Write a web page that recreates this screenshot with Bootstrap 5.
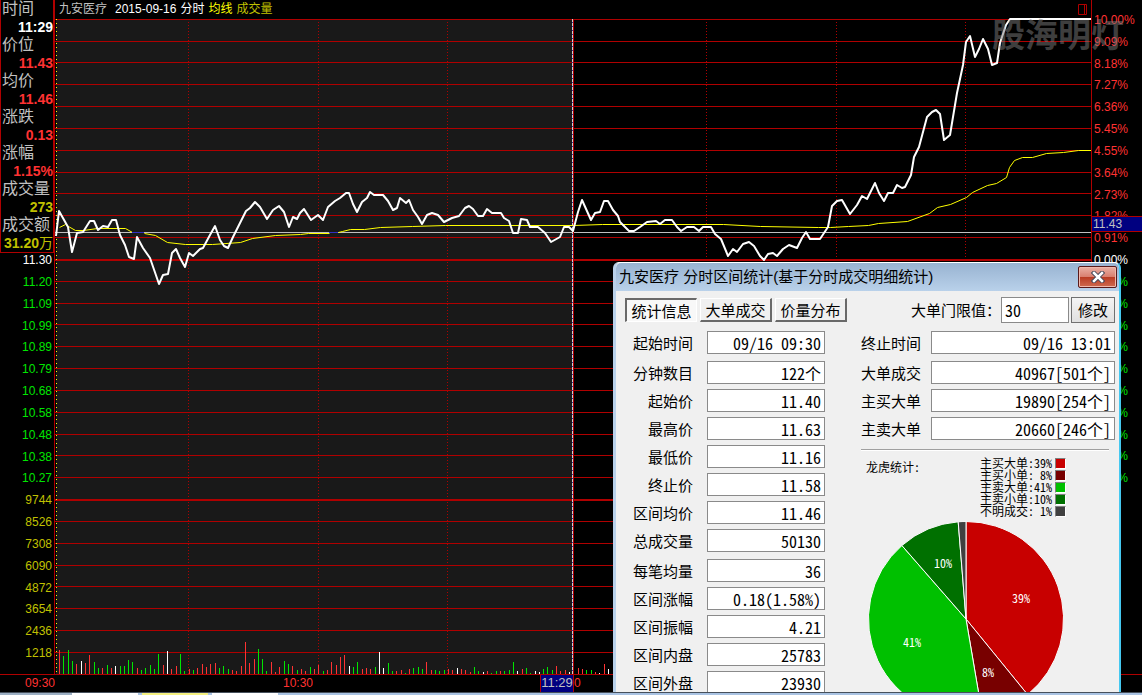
<!DOCTYPE html>
<html lang="zh-CN">
<head>
<meta charset="utf-8">
<meta name="viewport" content="width=device-width, initial-scale=1">
<title>九安医疗 分时</title>
<link href="https://cdn.jsdelivr.net/npm/bootstrap@5.3.0/dist/css/bootstrap.min.css" rel="stylesheet">
<style>
:root{--line:#b00000;--up:#ff3232;--down:#00e600;--vol:#c0c000;--navy:#000080}
body{background:#000;color:#c0c0c0;font:12px/18px "Liberation Sans","Noto Sans CJK SC",sans-serif}
svg{display:block}
.main-area{min-height:0}
.side-left{width:55px;border-right:1px solid var(--line)}
.side-right{width:51px;border-left:1px solid var(--line)}
.axis{padding:9px 0 10px}
.axis span{flex:1 1 0;min-height:0;display:flex;align-items:center;white-space:nowrap;line-height:1}
.side-left .axis span{justify-content:flex-end;padding-right:2px}
.side-right .axis span{padding-left:2px}
.gap-top{flex:11 1 0}
.gap-bottom{flex:8 1 0}
.c-up{color:var(--up)}.c-down{color:var(--down)}.c-vol{color:var(--vol)}
.readout{left:0;right:0;top:0;background:#000;border:solid var(--line);border-width:0 1px 1px}
.readout dt{font-size:16px;font-weight:400;line-height:18px;padding-left:1px;white-space:nowrap}
.readout dd{font-size:14px;font-weight:700;line-height:18px;margin:0;text-align:right;white-space:nowrap}
.readout dd i{font-style:normal;font-weight:400}
.chart-head{height:18px}
.plot{min-height:0}
.plot svg{width:100%;height:100%}
.plot svg *{vector-effect:non-scaling-stroke}
.price-tag{left:0;right:0;top:32%;height:16px;line-height:15px;background:var(--navy);border:solid var(--line);border-width:1px 0;padding-left:1px}
.watermark{right:18px;top:12px;font-size:33px;line-height:48px;font-weight:700;color:rgba(125,125,125,.5)}
.time-axis{display:grid;grid-template-columns:55px 258fr 261fr 518fr 50px;height:18px;border-top:1px solid var(--line);line-height:16px}
.time-axis div{text-align:right;white-space:nowrap;overflow:hidden}
.time-tag{display:inline-block;width:34px;background:var(--navy);color:#c0c0c0;border:solid var(--line);border-width:0 1px;line-height:15px;height:17px;text-align:center;font-size:13px}
.taskbar{height:3px;background:#a9c3e3;border-top:1px solid #46505c}
.taskbar i{width:66px}
/* statistics window */
.win{top:262px;bottom:0;right:21px;width:508px;background:#f0f0f0;color:#000;border:solid #b9d1ea;border-width:1px 2px 0 3px;border-top-color:#fff;border-right-color:#46c8f0;border-radius:6px 6px 0 0;font-family:"Noto Sans CJK SC",sans-serif;font-size:15px}
.win-title{height:28px;background:linear-gradient(#98b3d1,#b9d1ea);border-radius:5px 5px 0 0;padding:0 2px 0 3px}
.win-title h1{font:15px/28px "Liberation Sans","Noto Sans CJK SC",sans-serif;margin:0}
.btn-x{width:39px;height:22px;padding:0;border:1px solid #5a1a1a;border-radius:2px;background:linear-gradient(#eab0a4 0,#d98070 48%,#b93a22 50%,#cf6b50 100%);box-shadow:inset 0 0 0 1px #f0b8ac}
.win-body{padding:6px 4px 0 9px}
.tabs-old{gap:3px}
.btn-old{font:15px/20px "Noto Sans CJK SC",sans-serif;color:#000;padding:0;width:72px;height:24px;border:solid;border-width:1px 2px 2px 1px;border-color:#fff #696969 #696969 #fff;border-radius:0;background:#f0f0f0}
.btn-old.sunk{border-width:2px 1px 1px 2px;border-color:#696969 #fff #fff #696969;background:#f8f8f8}
.btn-mod{width:44px;height:26px;border:1px solid #707070;background:linear-gradient(#f4f4f4,#e0e0e0)}
.win .form-control{font:16px/20px "Noto Sans CJK SC",sans-serif;font-feature-settings:"hwid";height:23px;min-width:0;min-height:0;padding:0 3px;border:1px solid #8a8a8a;border-radius:0;color:#000;background:#fff;text-align:right}
.win .form-control.limit{width:68px;height:26px;text-align:left}
.stats{padding:8px 0 0 8px;gap:36px}
.pair{height:23px;margin-bottom:5px}
.pair label{width:60px;flex:none;text-align:right;line-height:21px;white-space:nowrap}
.pair.wide-below{margin-bottom:7px}
.col-l{width:192px}
.col-l label{margin-right:14px}.col-r label{margin-right:10px}
.rule{height:2px;margin:9px 6px 0 0;background:#a0a0a0;border-bottom:1px solid #fff}
.legend-row{padding:6px 49px 0 5px;font-size:12px;line-height:12px;font-feature-settings:"hwid"}
.legend-row li{display:flex;align-items:center;justify-content:flex-end;gap:3px;height:12px;white-space:pre}
.legend-row li i{width:11px;height:11px;border:solid;border-width:1px;border-color:#808080 #fff #fff #808080}
.pie{width:196px;height:196px;margin:4px 0 0 7px}
.pie text{font:12px "Noto Sans CJK SC",sans-serif;font-feature-settings:"hwid";fill:#fff;text-anchor:middle}
</style>
</head>
<body class="vh-100 d-flex flex-column overflow-hidden">
<div class="main-area flex-grow-1 d-flex flex-column position-relative">
  <div class="main-area flex-grow-1 d-flex">
    <aside class="side-left position-relative d-flex flex-column flex-shrink-0">
      <div class="axis flex-grow-1 d-flex flex-column" id="axisLeft"><div class="gap-top"></div></div>
      <dl class="readout position-absolute m-0">
        <dt>时间</dt><dd class="text-white">11:29</dd>
        <dt>价位</dt><dd class="c-up">11.43</dd>
        <dt>均价</dt><dd class="c-up">11.46</dd>
        <dt>涨跌</dt><dd class="c-up">0.13</dd>
        <dt>涨幅</dt><dd class="c-up">1.15%</dd>
        <dt>成交量</dt><dd class="c-vol">273</dd>
        <dt>成交额</dt><dd class="c-vol">31.20<i>万</i></dd>
      </dl>
    </aside>
    <main class="flex-grow-1 d-flex flex-column position-relative">
      <div class="chart-head d-flex align-items-center pe-1">
        <span class="ms-1">九安医疗</span>
        <span class="text-white ms-2">2015-09-16</span>
        <span class="text-white ms-1">分时</span>
        <span class="ms-1" style="color:#ff0">均线</span>
        <span class="ms-1 c-vol">成交量</span>
        <svg class="ms-auto" width="9" height="11" viewBox="0 0 9 11" fill="none" stroke="#b00000"><path d="M.5.5h8v10h-8zM6.5.5v10"/></svg>
      </div>
      <div class="plot flex-grow-1">
        <svg viewBox="55 18 1036 656" preserveAspectRatio="none" fill="none">
          <rect x="56" y="19" width="517" height="655" fill="#191919"/>
          <g id="grid" stroke="#b00000"></g>
          <path d="M188.500 22V674M318.500 22V674M447.500 22V674M706.500 22V674M836.500 22V674M965.500 22V674" stroke="#b00000" stroke-dasharray="1 2"/>
          <path d="M56.500 19V674" stroke="#ff0" stroke-dasharray="1 3"/>
          <g id="bars"></g>
          <path d="M55 232.500H1091" stroke="#c0c0c0"/>
          <path d="M573.500 19V674" stroke="#b00000"/>
          <path d="M572.500 19V674" stroke="#3030a0"/>
          <path d="M572.500 19V674" stroke="#d0d0d0" stroke-dasharray="3 1"/>
          <path stroke="#ff0" transform="translate(.5 .5)" d="M59 227L65 224 68 226 75 230 83 230 97 228 125 228 132 232M144 233L155 235 167 242 185 244 212 244 240 242 252 238 275 235 300 234 308 233 329 233M338 232L342 231 350 229 364 229 380 227 412 226 445 225 573 225 602 224 723 224 760 226 818 227 830 227 848 226 868 225 878 223 907 221 929 213 937 207 950 204 966 197 972 192 987 185 996 183 1006 177 1009 167 1014 160 1022 157 1032 157 1046 153 1063 152 1078 150 1091 150"/>
          <path stroke="#3030c0" d="M132 232.500h12M329 232.500h9"/>
          <path stroke="#fff" stroke-width="2" stroke-linejoin="round" d="M56 236L59 211 68 227 72 252 77 233 83 232 90 221 94 221 98 230 103 226 108 227 112 220 116 220 120 235 125 245 129 257 134 259 137 237 143 248 150 258 159 284 163 275 168 274 172 253 176 249 180 258 185 267 189 253 193 256 200 249 203 248 210 235 215 226 220 240 224 246 228 248 233 237 240 223 246 211 250 208 255 202 260 207 267 219 273 210 279 206 284 212 289 227 293 217 297 219 300 213 304 209 311 220 318 215 323 220 328 207 335 201 340 198 346 193 349 193 353 204 357 212 362 202 367 198 370 192 374 195 383 195 388 201 393 210 397 208 400 198 406 203 409 200 413 210 418 217 422 224 427 215 432 213 438 215 444 222 452 218 459 216 465 208 469 206 473 209 478 216 483 216 487 209 492 213 501 213 504 218 509 221 513 233 518 233 521 219 527 220 530 227 538 227 545 233 551 242 560 237 564 227 569 227 573 231 578 212 582 200 591 220 595 213 600 212 604 201 608 201 613 210 618 216 620 222 629 231 634 231 640 227 647 222 656 221 660 224 665 220 672 220 677 227 681 231 687 227 694 227 699 231 703 227 711 227 715 234 721 239 728 256 733 249 737 252 743 244 749 242 754 246 760 256 764 260 768 254 773 253 777 256 783 249 789 245 797 248 802 238 806 232 810 239 820 239 828 227 832 206 837 201 842 200 850 214 857 205 862 196 867 199 875 183 879 193 884 201 888 193 893 193 897 185 902 188 905 187 911 175 914 157 919 147 927 117 932 112 936 110 940 114 944 140 950 135 957 93 963 65 966 42 970 36 975 57 979 49 983 39 988 49 992 65 997 63 1000 43 1006 25 1010 19 1091 19"/>
        </svg>
      </div>
    </main>
    <aside class="side-right position-relative d-flex flex-column flex-shrink-0">
      <div class="axis flex-grow-1 d-flex flex-column" id="axisRight"></div>
      <div class="price-tag position-absolute">11.43</div>
    </aside>
    <div class="watermark position-absolute">股海明灯</div>
  </div>
  <div class="time-axis flex-shrink-0 c-up">
    <div>09:30</div>
    <div>10:30</div>
    <div><span class="time-tag">11:29</span></div>
    <div class="text-start">0</div>
    <div></div>
  </div>

  <section class="win position-absolute overflow-hidden">
    <header class="win-title d-flex align-items-center justify-content-between">
      <h1>九安医疗 分时区间统计(基于分时成交明细统计)</h1>
      <button class="btn btn-x d-flex align-items-center justify-content-center" type="button" aria-label="关闭">
        <svg width="14" height="12" viewBox="0 0 14 12"><path d="M3 2l8 8M11 2l-8 8" stroke="#4a4a5a" stroke-width="4.500" stroke-linecap="square"/><path d="M3 2l8 8M11 2l-8 8" stroke="#fff" stroke-width="2.500" stroke-linecap="square"/></svg>
      </button>
    </header>
    <div class="win-body">
      <div class="d-flex align-items-center justify-content-between">
        <div class="tabs-old d-flex">
          <button class="btn btn-old sunk" type="button">统计信息</button>
          <button class="btn btn-old" type="button">大单成交</button>
          <button class="btn btn-old" type="button">价量分布</button>
        </div>
        <div class="d-flex align-items-center">
          <label for="limit">大单门限值：</label>
          <input id="limit" class="form-control limit" value="30">
          <button class="btn btn-old btn-mod" type="button" style="margin-left:2px">修改</button>
        </div>
      </div>
      <div class="stats d-flex">
        <div class="col-l flex-shrink-0" id="statsLeft"></div>
        <div class="col-r flex-grow-1">
          <div id="statsRight"></div>
          <div class="rule"></div>
          <div class="legend-row d-flex justify-content-between">
            <span class="pt-1">龙虎统计:</span>
            <ul class="list-unstyled m-0">
              <li>主买大单:39%<i style="background:#c80000"></i></li>
              <li>主买小单: 8%<i style="background:#780000"></i></li>
              <li>主卖大单:41%<i style="background:#00c000"></i></li>
              <li>主卖小单:10%<i style="background:#007000"></i></li>
              <li>不明成交: 1%<i style="background:#404040"></i></li>
            </ul>
          </div>
          <svg class="pie" viewBox="-98 -98 196 196" stroke="#fff">
            <path fill="#c80000" d="M0 0V-97.500A97.500 97.500 0 0 1 61.600 75.600z"/>
            <path fill="#780000" d="M0 0L61.600 75.600A97.500 97.500 0 0 1 16.400 96.100z"/>
            <path fill="#00c000" d="M0 0L16.400 96.100A97.500 97.500 0 0 1 -64.100 -73.500z"/>
            <path fill="#007000" d="M0 0L-64.100 -73.500A97.500 97.500 0 0 1 -7.800 -97.200z"/>
            <path fill="#404040" d="M0 0L-7.800 -97.200A97.500 97.500 0 0 1 0 -97.500z"/>
            <circle r="98" fill="none" stroke="#f0f0f0"/>
            <g stroke="none"><text x="55" y="-16">39%</text><text x="22" y="58">8%</text><text x="-54" y="28">41%</text><text x="-23" y="-51">10%</text></g>
          </svg>
        </div>
      </div>
    </div>
  </section>
</div>
<footer class="taskbar d-flex flex-shrink-0">
  <i style="background:#9db0c4;width:72px"></i><i style="background:#fff"></i><i style="margin-left:4px;background:#f4f080"></i><i style="margin-left:4px;background:#fff"></i>
</footer>
<script src="https://cdn.jsdelivr.net/npm/bootstrap@5.3.0/dist/js/bootstrap.bundle.min.js"></script>
<script>
const el = id => document.getElementById(id);
const labels = (list, cls) => list.split(' ').map(t => `<span class="${cls}">${t}</span>`).join('');

el('axisLeft').innerHTML += labels('11.30', 'text-white')
  + labels('11.20 11.09 10.99 10.89 10.79 10.68 10.58 10.48 10.38 10.27', 'c-down')
  + labels('9744 8526 7308 6090 4872 3654 2436 1218', 'c-vol');
const pct = '10.00% 9.09% 8.18% 7.27% 6.36% 5.45% 4.55% 3.64% 2.73% 1.82% 0.91%';
el('axisRight').innerHTML = labels(pct, 'c-up') + labels('0.00%', 'text-white')
  + labels(pct.split(' ').reverse().slice(0, 10).join(' '), 'c-down') + '<div class="gap-bottom"></div>';

// 30 equal price and volume steps
let grid = '';
for (let k = 0; k < 30; k++) {
  const y = Math.floor(19.2 + k * 655 / 30), h = k % 11 === 0 && k ? 2 : 1;
  grid += `<path d="M55 ${y + h / 2}H1091" stroke-width="${h}"/>`;
}
el('grid').innerHTML = grid;

// one bar a minute: colour and height
const volume = 'r24 g18 g24 g13 r10 w13 r11 r19 g12 g6 r6 g9 r6 w8 g8 g8 g14 g12 r6 g4 g6 g9 g5 g20 r9 w23 r5 r8 g20 g3 r5 g4 r6 r10 r7 r10 r11 g6 g8 g5 r4 r3 r8 r32 r11 r15 g25 g15 g3 r12 r2 r7 g13 g10 r8 g4 r5 r3 g7 r5 r9 g3 r4 r12 r9 r17 r19 w8 g7 g12 r5 r6 r5 g7 w22 w6 g11 g3 r3 r4 g1 r5 g6 g7 g5 r12 r4 g4 g3 g4 r5 r4 w6 r5 r4 r2 g7 g3 w2 r3 g1 g3 r3 g3 g4 g12 w3 r5 g6 g1 w3 w2 g5 g7 g4 r8 r3 r4 w2 g5 r6 r5 g4 g4 r2 w1 r10 w5'.split(' ');
const tone = {r: '#ff3232', g: '#00e600', w: '#fff'};
const first = 59, step = 549 / (volume.length - 1);
el('bars').innerHTML = volume.map((v, i) =>
  `<path stroke="${tone[v[0]]}" d="M${Math.round(first + i * step) + .5} 674v-${v.slice(1)}"/>`).join('');

const pairs = (list, key, breaks) => list.map(([name, value], i) =>
  `<div class="pair d-flex align-items-center${breaks.includes(i) ? ' wide-below' : ''}"><label for="${key}${i}">${name}</label><input id="${key}${i}" class="form-control flex-fill" readonly value="${value}"></div>`).join('');
el('statsLeft').innerHTML = pairs([['起始时间', '09/16 09:30'], ['分钟数目', '122个'], ['起始价', '11.40'], ['最高价', '11.63'], ['最低价', '11.16'], ['终止价', '11.58'], ['区间均价', '11.46'], ['总成交量', '50130'], ['每笔均量', '36'], ['区间涨幅', '0.18(1.58%)'], ['区间振幅', '4.21'], ['区间内盘', '25783'], ['区间外盘', '23930']], 'a', [0, 7]);
el('statsRight').innerHTML = pairs([['终止时间', '09/16 13:01'], ['大单成交', '40967[501个]'], ['主买大单', '19890[254个]'], ['主卖大单', '20660[246个]']], 'b', [0]);
</script>
</body>
</html>
